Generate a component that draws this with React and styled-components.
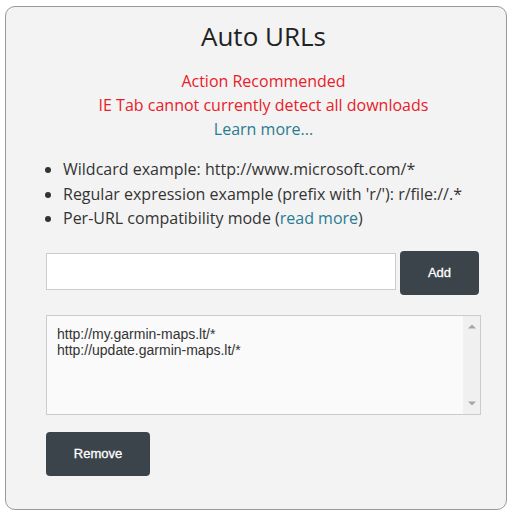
import React from 'react'
import styled, { createGlobalStyle } from 'styled-components'

const GlobalStyle = createGlobalStyle`
  html, body {
    margin: 0;
    padding: 0;
    background: #fff;
  }
  body {
    font-family: "Open Sans", "Liberation Sans", Arial, sans-serif;
  }
`

const Panel = styled.div`
  box-sizing: border-box;
  width: 502px;
  height: 504px;
  margin: 6px 0 0 5px;
  padding: 11px 25px 0 40px;
  background: #f3f3f3;
  border: 1px solid #999;
  border-radius: 10px;
  display: flex;
  flex-direction: column;
`

const Title = styled.h1`
  margin: 0;
  font-size: 26px;
  line-height: 36px;
  font-weight: 400;
  color: #222;
  text-align: center;
`

const Notice = styled.div`
  margin-top: 15px;
  text-align: center;
  font-size: 16px;
  line-height: 24px;
  color: #e8202a;
`

const Link = styled.a`
  color: #2a7b91;
  text-decoration: none;
  cursor: pointer;
`

const Hints = styled.ul`
  margin: 16px 0 0;
  padding: 0 0 0 17px;
  font-size: 16px;
  line-height: 24.5px;
  color: #333;
`

const AddRow = styled.div`
  display: flex;
  align-items: flex-start;
  gap: 4px;
  margin-top: 20px;
  padding-right: 2px;
`

const UrlInput = styled.input`
  box-sizing: border-box;
  flex: 1;
  height: 37px;
  margin-top: 2px;
  padding: 0 10px;
  background: #fff;
  border: 1px solid #ccc;
  font-family: "Liberation Sans", Arial, sans-serif;
  font-size: 14px;
  outline: none;
`

const Button = styled.button`
  box-sizing: border-box;
  width: ${p => p.$width}px;
  height: 44px;
  padding: 0;
  background: #3c444b;
  color: #fff;
  border: none;
  border-radius: 4px;
  font-family: "Liberation Sans", Arial, sans-serif;
  font-size: 13px;
  -webkit-text-stroke: 0.3px #fff;
  cursor: pointer;
`

const ListBox = styled.div`
  position: relative;
  width: 435px;
  height: 100px;
  margin-top: 20px;
`

const UrlList = styled.textarea`
  box-sizing: border-box;
  display: block;
  width: 100%;
  height: 100%;
  margin: 0;
  padding: 10px 28px 10px 10px;
  background: #fafafa;
  border: 1px solid #ccc;
  color: #333;
  font-family: "Liberation Sans", Arial, sans-serif;
  font-size: 14px;
  line-height: 16px;
  resize: none;
  overflow: hidden;
  outline: none;
`

const ScrollTrack = styled.div`
  position: absolute;
  top: 1px;
  right: 1px;
  bottom: 1px;
  width: 17px;
  background: #f0f0f0;
  display: flex;
  flex-direction: column;
  justify-content: space-between;
  align-items: center;
  padding: 8px 0;
  box-sizing: border-box;
  pointer-events: none;
`

const Arrow = ({ down }) => (
  <svg width="8" height="5" viewBox="0 0 8 5">
    <path d={down ? 'M0 0.5 L8 0.5 L4 4.5 Z' : 'M0 4.5 L8 4.5 L4 0.5 Z'} fill="#a6a6a6" />
  </svg>
)

const Footer = styled.div`
  margin-top: 17px;
`

const urls = ['http://my.garmin-maps.lt/*', 'http://update.garmin-maps.lt/*']

export default function App() {
  return (
    <>
      <GlobalStyle />
      <Panel>
        <Title>Auto URLs</Title>
        <Notice>
          Action Recommended
          <br />
          IE Tab cannot currently detect all downloads
          <br />
          <Link>Learn more...</Link>
        </Notice>
        <Hints>
          <li>Wildcard example: http://www.microsoft.com/*</li>
          <li>Regular expression example (prefix with 'r/'): r/file://.*</li>
          <li>
            Per-URL compatibility mode (<Link>read more</Link>)
          </li>
        </Hints>
        <AddRow>
          <UrlInput type="text" />
          <Button $width={79}>Add</Button>
        </AddRow>
        <ListBox>
          <UrlList readOnly value={urls.join('\n')} />
          <ScrollTrack>
            <Arrow />
            <Arrow down />
          </ScrollTrack>
        </ListBox>
        <Footer>
          <Button $width={104}>Remove</Button>
        </Footer>
      </Panel>
    </>
  )
}
